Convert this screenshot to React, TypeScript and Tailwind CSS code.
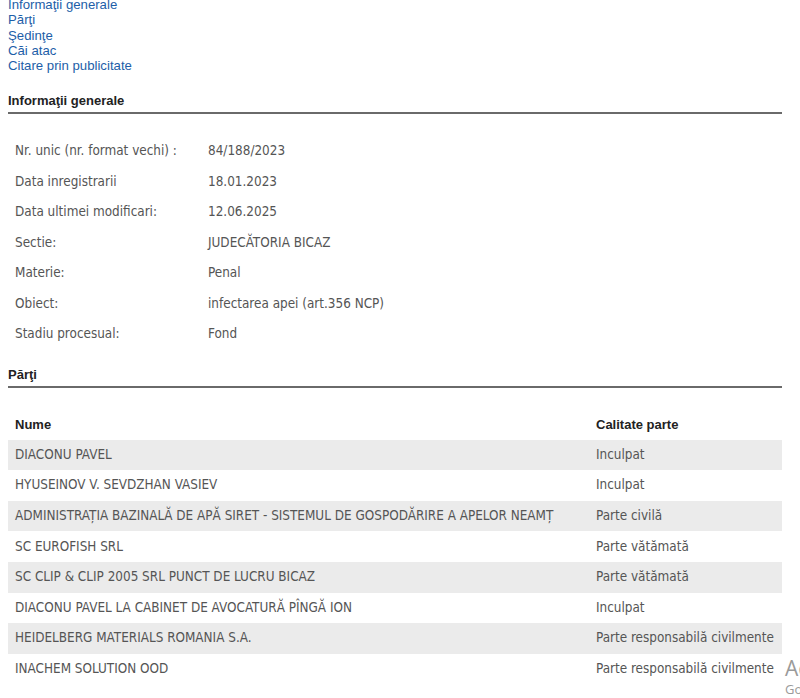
// Dosar — pagina de detalii (informaţii generale + părţi)

const LINKS = ['Informaţii generale', 'Părţi', 'Şedinţe', 'Căi atac', 'Citare prin publicitate'];

const INFO = [
  ['Nr. unic (nr. format vechi) :', '84/188/2023'],
  ['Data inregistrarii', '18.01.2023'],
  ['Data ultimei modificari:', '12.06.2025'],
  ['Sectie:', 'JUDECĂTORIA BICAZ'],
  ['Materie:', 'Penal'],
  ['Obiect:', 'infectarea apei (art.356 NCP)'],
  ['Stadiu procesual:', 'Fond'],
];

const PARTI = [
  ['DIACONU PAVEL', 'Inculpat'],
  ['HYUSEINOV V. SEVDZHAN VASIEV', 'Inculpat'],
  ['ADMINISTRAȚIA BAZINALĂ DE APĂ SIRET - SISTEMUL DE GOSPODĂRIRE A APELOR NEAMȚ', 'Parte civilă'],
  ['SC EUROFISH SRL', 'Parte vătămată'],
  ['SC CLIP & CLIP 2005 SRL PUNCT DE LUCRU BICAZ', 'Parte vătămată'],
  ['DIACONU PAVEL LA CABINET DE AVOCATURĂ PÎNGĂ ION', 'Inculpat'],
  ['HEIDELBERG MATERIALS ROMANIA S.A.', 'Parte responsabilă civilmente'],
  ['INACHEM SOLUTION OOD', 'Parte responsabilă civilmente'],
];

const body = "font-['DejaVu_Sans_Condensed',Tahoma,sans-serif] text-[13.4px] text-[#555]";

function SectionTitle({ children }: { children: string }) {
  return (
    <div className="border-b-2 border-[#6a6a6a] pb-[1px] pt-[1px] font-['Liberation_Sans',Arial,sans-serif] text-[13px] font-bold text-[#222]">
      {children}
    </div>
  );
}

export default function App() {
  return (
    <div className="relative h-[698px] w-[800px] overflow-hidden bg-white">
      {/* Ancore */}
      <ul className="mt-[-3px] pl-[8px] font-['Liberation_Sans',Arial,sans-serif] text-[13.2px] leading-[15.3px] text-[#1d5ea8]">
        {LINKS.map((l) => (
          <li key={l}>{l}</li>
        ))}
      </ul>

      <div className="ml-[8px] mr-[18px] mt-[17px]">
        <SectionTitle>Informaţii generale</SectionTitle>

        <div className={`mt-[22px] ${body}`}>
          {INFO.map(([k, v]) => (
            <div key={k} className="flex h-[30.5px] items-center pl-[7px]">
              <span className="w-[193px]">{k}</span>
              <span>{v}</span>
            </div>
          ))}
        </div>

        <div className="mt-[15px]">
          <SectionTitle>Părţi</SectionTitle>
        </div>

        <div className="mt-[21px]">
          <div className="flex h-[30.6px] items-center pl-[7px] font-['Liberation_Sans',Arial,sans-serif] text-[13px] font-bold text-[#222]">
            <span className="w-[581px]">Nume</span>
            <span>Calitate parte</span>
          </div>
          {PARTI.map(([n, c], i) => (
            <div
              key={n}
              className={`flex h-[30.6px] items-center pl-[7px] ${body} ${i % 2 === 0 ? 'bg-[#ebebeb]' : ''}`}
            >
              <span className="w-[581px] whitespace-nowrap">{n}</span>
              <span className="whitespace-nowrap">{c}</span>
            </div>
          ))}
        </div>
      </div>

      {/* Watermark Windows */}
      <div className="absolute left-[785px] top-[656px] whitespace-nowrap font-['Open_Sans',sans-serif] text-[#9a9a9a]">
        <div className="text-[21px] leading-[24px]">Activate Windows</div>
        <div className="text-[13px] leading-[18px]">Go to Settings to activate Windows.</div>
      </div>
    </div>
  );
}
